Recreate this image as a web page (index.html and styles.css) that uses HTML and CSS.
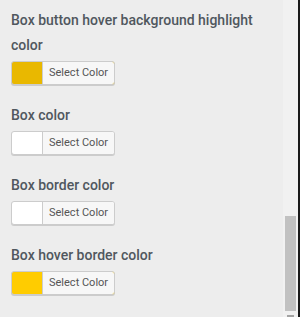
FILE: index.html
```html
<!DOCTYPE html>
<html lang="en">
  <head>
    <meta http-equiv="Content-Type" content="text/html;charset=UTF-8" />
    <meta name="viewport" content="width=device-width, initial-scale=1.0" />
    <title>Box colors</title>
    <link rel="stylesheet" href="styles.css">
  </head>
  <body>
    <div class="panel">
      <main class="options">
        <div class="option">
          <h3 class="optionLabel">Box button hover background highlight color</h3>
          <button type="button" class="colorResult" style="background-color: #e9b800">
            <span class="colorResultText">Select Color</span>
          </button>
        </div>

        <div class="option">
          <h3 class="optionLabel">Box color</h3>
          <button type="button" class="colorResult" style="background-color: #ffffff">
            <span class="colorResultText">Select Color</span>
          </button>
        </div>

        <div class="option">
          <h3 class="optionLabel">Box border color</h3>
          <button type="button" class="colorResult" style="background-color: #ffffff">
            <span class="colorResultText">Select Color</span>
          </button>
        </div>

        <div class="option">
          <h3 class="optionLabel">Box hover border color</h3>
          <button type="button" class="colorResult" style="background-color: #ffcc00">
            <span class="colorResultText">Select Color</span>
          </button>
        </div>
      </main>

      <!-- fake scrollbar -->
      <div class="scrollTrack">
        <div class="scrollThumb"></div>
        <div class="scrollArrow"></div>
      </div>
      <div class="edge"></div>
    </div>
  </body>
</html>
```

FILE: styles.css
```css
/* Styles untuk body */
body {
  margin: 0;
  background-color: #ededed;
  font-family: Roboto, "Liberation Sans", Arial, sans-serif;
  overflow: hidden;
}

.panel {
  display: flex;
  height: 317px;
}

/* Styles untuk daftar opsi */
.options {
  flex: 1;
  padding: 8px 0 0 11px;
}

.option {
  margin-bottom: 18px;
}

.optionLabel {
  margin: 0 0 3px;
  font-size: 14px;
  font-weight: 500;
  line-height: 25px;
  color: #50575e;
  padding-right: 20px;
}

/* Styles untuk tombol warna */
.colorResult {
  display: block;
  height: 24px;
  margin: 0;
  padding: 0 0 0 30px;
  border: 1px solid #cccccc;
  border-radius: 3px;
  box-shadow: 0 1px 0 #cccccc;
  font-family: inherit;
  cursor: pointer;
}

.colorResultText {
  display: block;
  height: 22px;
  line-height: 22px;
  padding: 0 6px;
  background-color: #f7f7f7;
  border-left: 1px solid #cccccc;
  border-radius: 0 2px 2px 0;
  font-size: 11px;
  color: #555555;
}

/* Styles untuk scrollbar */
.scrollTrack {
  width: 15px;
  background-color: #f1f1f1;
  padding-top: 216px;
  box-sizing: border-box;
}

.scrollThumb {
  width: 11px;
  height: 95px;
  margin-left: 2px;
  background-color: #c1c1c1;
}

.scrollArrow {
  width: 7px;
  height: 2px;
  margin: 4px 0 0 4px;
  background-color: #a3a3a3;
}

.edge {
  width: 2px;
  background-color: #1a1a1a;
}
```
